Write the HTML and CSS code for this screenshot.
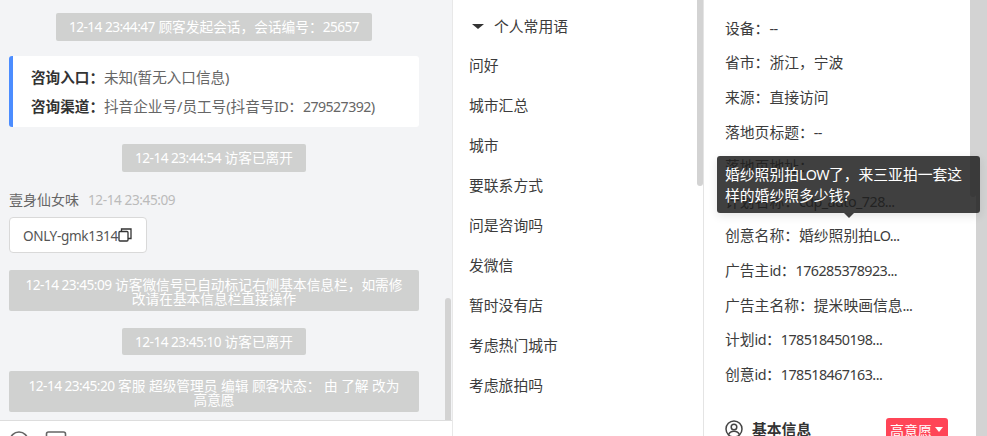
FILE: index.html
```html
<!DOCTYPE html>
<html lang="zh-CN">
<head>
<meta charset="utf-8">
<title>会话</title>
<link rel="stylesheet" href="styles.css">
</head>
<body>
<div class="app">
  <section class="chat">
    <div class="log">
      <div class="sys sys-fit"><span class="la">12-14 23:44:47</span> 顾客发起会话，会话编号：<span class="la">25657</span></div>
      <div class="entry">
        <p class="entry-row"><b>咨询入口：</b>未知(暂无入口信息)</p>
        <p class="entry-row"><b>咨询渠道：</b>抖音企业号/员工号(抖音号<span class="la">ID</span>：<span class="la">279527392</span>)</p>
      </div>
      <div class="sys sys-fit"><span class="la">12-14 23:44:54</span> 访客已离开</div>
      <div class="visitor">
        <div class="visitor-head"><span>壹身仙女味</span><span class="visitor-time">12-14 23:45:09</span></div>
        <div class="bubble"><span class="la">ONLY-gmk1314</span><svg class="copy" width="14" height="14" viewBox="0 0 14 14" fill="none" stroke="#333" stroke-width="1.3"><rect x="1" y="3.500" width="9" height="9.500" rx="1"/><path d="M3.500 3.500V1h9.500v9.500h-3"/></svg></div>
      </div>
      <div class="sys sys-wide"><span class="la">12-14 23:45:09</span> 访客微信号已自动标记右侧基本信息栏，如需修改请在基本信息栏直接操作</div>
      <div class="sys sys-fit sys-short"><span class="la">12-14 23:45:10</span> 访客已离开</div>
      <div class="sys sys-wide"><span class="la">12-14 23:45:20</span> 客服 超级管理员 编辑 顾客状态： 由 了解 改为 高意愿</div>
      <div class="thumb thumb-chat"></div>
    </div>
    <div class="toolbar">
      <svg class="tool" width="20" height="20" viewBox="0 0 20 20" fill="none" stroke="#666" stroke-width="1.600"><circle cx="10" cy="10" r="9"/></svg>
      <svg class="tool" width="22" height="20" viewBox="0 0 22 20" fill="none" stroke="#666" stroke-width="1.600"><rect x="1.500" y="1" width="19" height="17" rx="2"/></svg>
    </div>
  </section>

  <section class="phrases">
    <div class="phrase-head"><span class="caret"></span>个人常用语</div>
    <div class="phrase">问好</div>
    <div class="phrase">城市汇总</div>
    <div class="phrase">城市</div>
    <div class="phrase">要联系方式</div>
    <div class="phrase">问是咨询吗</div>
    <div class="phrase">发微信</div>
    <div class="phrase">暂时没有店</div>
    <div class="phrase">考虑热门城市</div>
    <div class="phrase">考虑旅拍吗</div>
    <div class="thumb thumb-phrases"></div>
  </section>

  <section class="info">
    <div class="info-row">设备：<span class="la">--</span></div>
    <div class="info-row">省市：浙江，宁波</div>
    <div class="info-row">来源：直接访问</div>
    <div class="info-row">落地页标题：<span class="la">--</span></div>
    <div class="info-row">落地页地址：</div>
    <div class="info-row">计划名称：<span class="la">cdp_auto_728...</span></div>
    <div class="info-row">创意名称：婚纱照别拍<span class="la">LO...</span></div>
    <div class="info-row">广告主<span class="la">id</span>：<span class="la">176285378923...</span></div>
    <div class="info-row">广告主名称：提米映画信息<span class="la">...</span></div>
    <div class="info-row">计划<span class="la">id</span>：<span class="la">178518450198...</span></div>
    <div class="info-row">创意<span class="la">id</span>：<span class="la">178518467163...</span></div>
    <div class="basic">
      <svg class="basic-icon" width="18" height="18" viewBox="0 0 18 18" fill="none" stroke="#444" stroke-width="1.500"><circle cx="9" cy="9" r="8"/><circle cx="9" cy="7" r="2.800"/><path d="M3.500 14.800c1-2.600 3.200-3.600 5.500-3.600s4.500 1 5.500 3.600"/></svg>
      <b class="basic-title">基本信息</b>
      <span class="badge">高意愿<span class="badge-caret"></span></span>
    </div>
    <div class="thumb thumb-info"></div>
  </section>
  <div class="gutter"></div>

  <div class="tooltip">婚纱照别拍<span class="la">LOW</span>了，来三亚拍一套这样的婚纱照多少钱?</div>
</div>
</body>
</html>
```
FILE: styles.css
```css
* { box-sizing: border-box; }
html, body { margin: 0; height: 100%; overflow: hidden; }
body {
  font-family: "Noto Sans", "Noto Sans CJK SC", sans-serif;
  font-size: 14px;
  color: #333;
  background: #fff;
}
.app { position: relative; display: flex; width: 987px; height: 436px; overflow: hidden; }
.la { font-size: .97em; letter-spacing: -.04em; }

.chat { width: 452px; display: flex; flex-direction: column; background: #f3f4f6; }
.log { position: relative; flex: 1; min-height: 0; padding: 13px 33px 0 9px; display: flex; flex-direction: column; align-items: center; }
.log > * { flex: none; }
.sys {
  background: #d0d1d0;
  color: #fff;
  border-radius: 2px;
  text-align: center;
  font-size: 13.700px;
  line-height: 14px;
}
.sys .la { font-size: 1em; }
.sys-fit { padding: 7px 13px; height: 28px; margin-bottom: 16px; }
.sys-short { height: 27px; }
.sys-wide { width: 100%; padding: 8px 13px 0; height: 41px; margin-bottom: 17px; }
.entry { width: 100%; height: 71px; margin-top: -1px; background: #fff; border-left: 4px solid #4c8dff; border-radius: 3px; padding: 7px 0 0 18px; margin-bottom: 17px; }
.entry-row { margin: 0; height: 29px; line-height: 29px; font-size: 14.600px; color: #666; white-space: nowrap; }
.entry-row b { color: #333; font-weight: 700; }
.visitor { width: 100%; margin-bottom: 17px; }
.visitor-head { display: flex; gap: 9px; height: 45px; padding-top: 17px; line-height: 22px; color: #666; margin-top: -16px; }
.visitor-time { color: #bbb; letter-spacing: -.03em; font-size: 13.600px; }
.bubble { display: flex; align-items: center; width: 138px; height: 36px; padding-left: 13px; background: #fff; border: 1px solid #d9d9d9; border-radius: 4px; color: #555; }
.bubble .la { letter-spacing: -.025em; }
.copy { flex: none; }

.toolbar { height: 16px; flex: none; background: #fff; border-top: 1px solid #ddd; display: flex; gap: 16px; padding: 10px 0 0 9px; overflow: hidden; }
.tool { flex: none; }

.thumb { position: absolute; background: #d3d3d3; width: 6px; }
.thumb-chat { right: 1px; top: 298px; height: 122px; border-radius: 3px 3px 0 0; }
.thumb-phrases { right: 0; top: 0; height: 186px; border-radius: 0 0 3px 3px; }
.thumb-info { right: 0; top: 0; height: 197px; border-radius: 0 0 3px 3px; }

.phrases { position: relative; width: 252px; border-left: 1px solid #e8e8e8; border-right: 1px solid #e4e4e4; background: #fff; padding-left: 16px; font-size: 14.800px; color: #3c3c3c; }
.phrase-head { height: 45px; padding: 15px 0 0 3px; line-height: 22px; display: flex; align-items: flex-start; }
.caret { width: 0; height: 0; margin: 9px 10px 0 0; border-style: solid; border-color: #333 transparent transparent; border-width: 5px 6px 0; }
.phrase { height: 40px; line-height: 40px; }

.info { position: relative; width: 272px; background: #fff; padding: 10.600px 0 0 21px; font-size: 14.800px; color: #3c3c3c; }
.info-row { height: 34.650px; line-height: 34.650px; white-space: nowrap; }
.basic { display: flex; align-items: center; margin-top: 25.900px; height: 22px; }
.basic-icon { flex: none; margin-right: 9px; }
.basic-title { font-size: 14.800px; color: #333; width: 134px; }
.badge { display: inline-flex; align-items: center; flex: none; height: 24px; margin-top: 2px; padding: 0 5px 0 4px; font-size: 14px; background: #ff4557; color: #fff; border-radius: 3px; }
.badge-caret { margin-left: 3px; border-style: solid; border-color: #fff transparent transparent; border-width: 5px 4px 0; }
.gutter { flex: 1; background: #d3d3d3; }

.tooltip {
  position: absolute;
  left: 717px; top: 156px;
  width: 263px; height: 57px;
  padding: 8px;
  background: rgba(30, 30, 30, .85);
  color: #fff;
  font-size: 14.800px;
  line-height: 20px;
  border-radius: 3px;
  box-shadow: 0 3px 10px rgba(0, 0, 0, .1);
}
.tooltip::after {
  content: "";
  position: absolute;
  left: 127px; top: 57px;
  border-style: solid;
  border-color: rgba(30, 30, 30, .85) transparent transparent;
  border-width: 5px 5px 0;
}
```
